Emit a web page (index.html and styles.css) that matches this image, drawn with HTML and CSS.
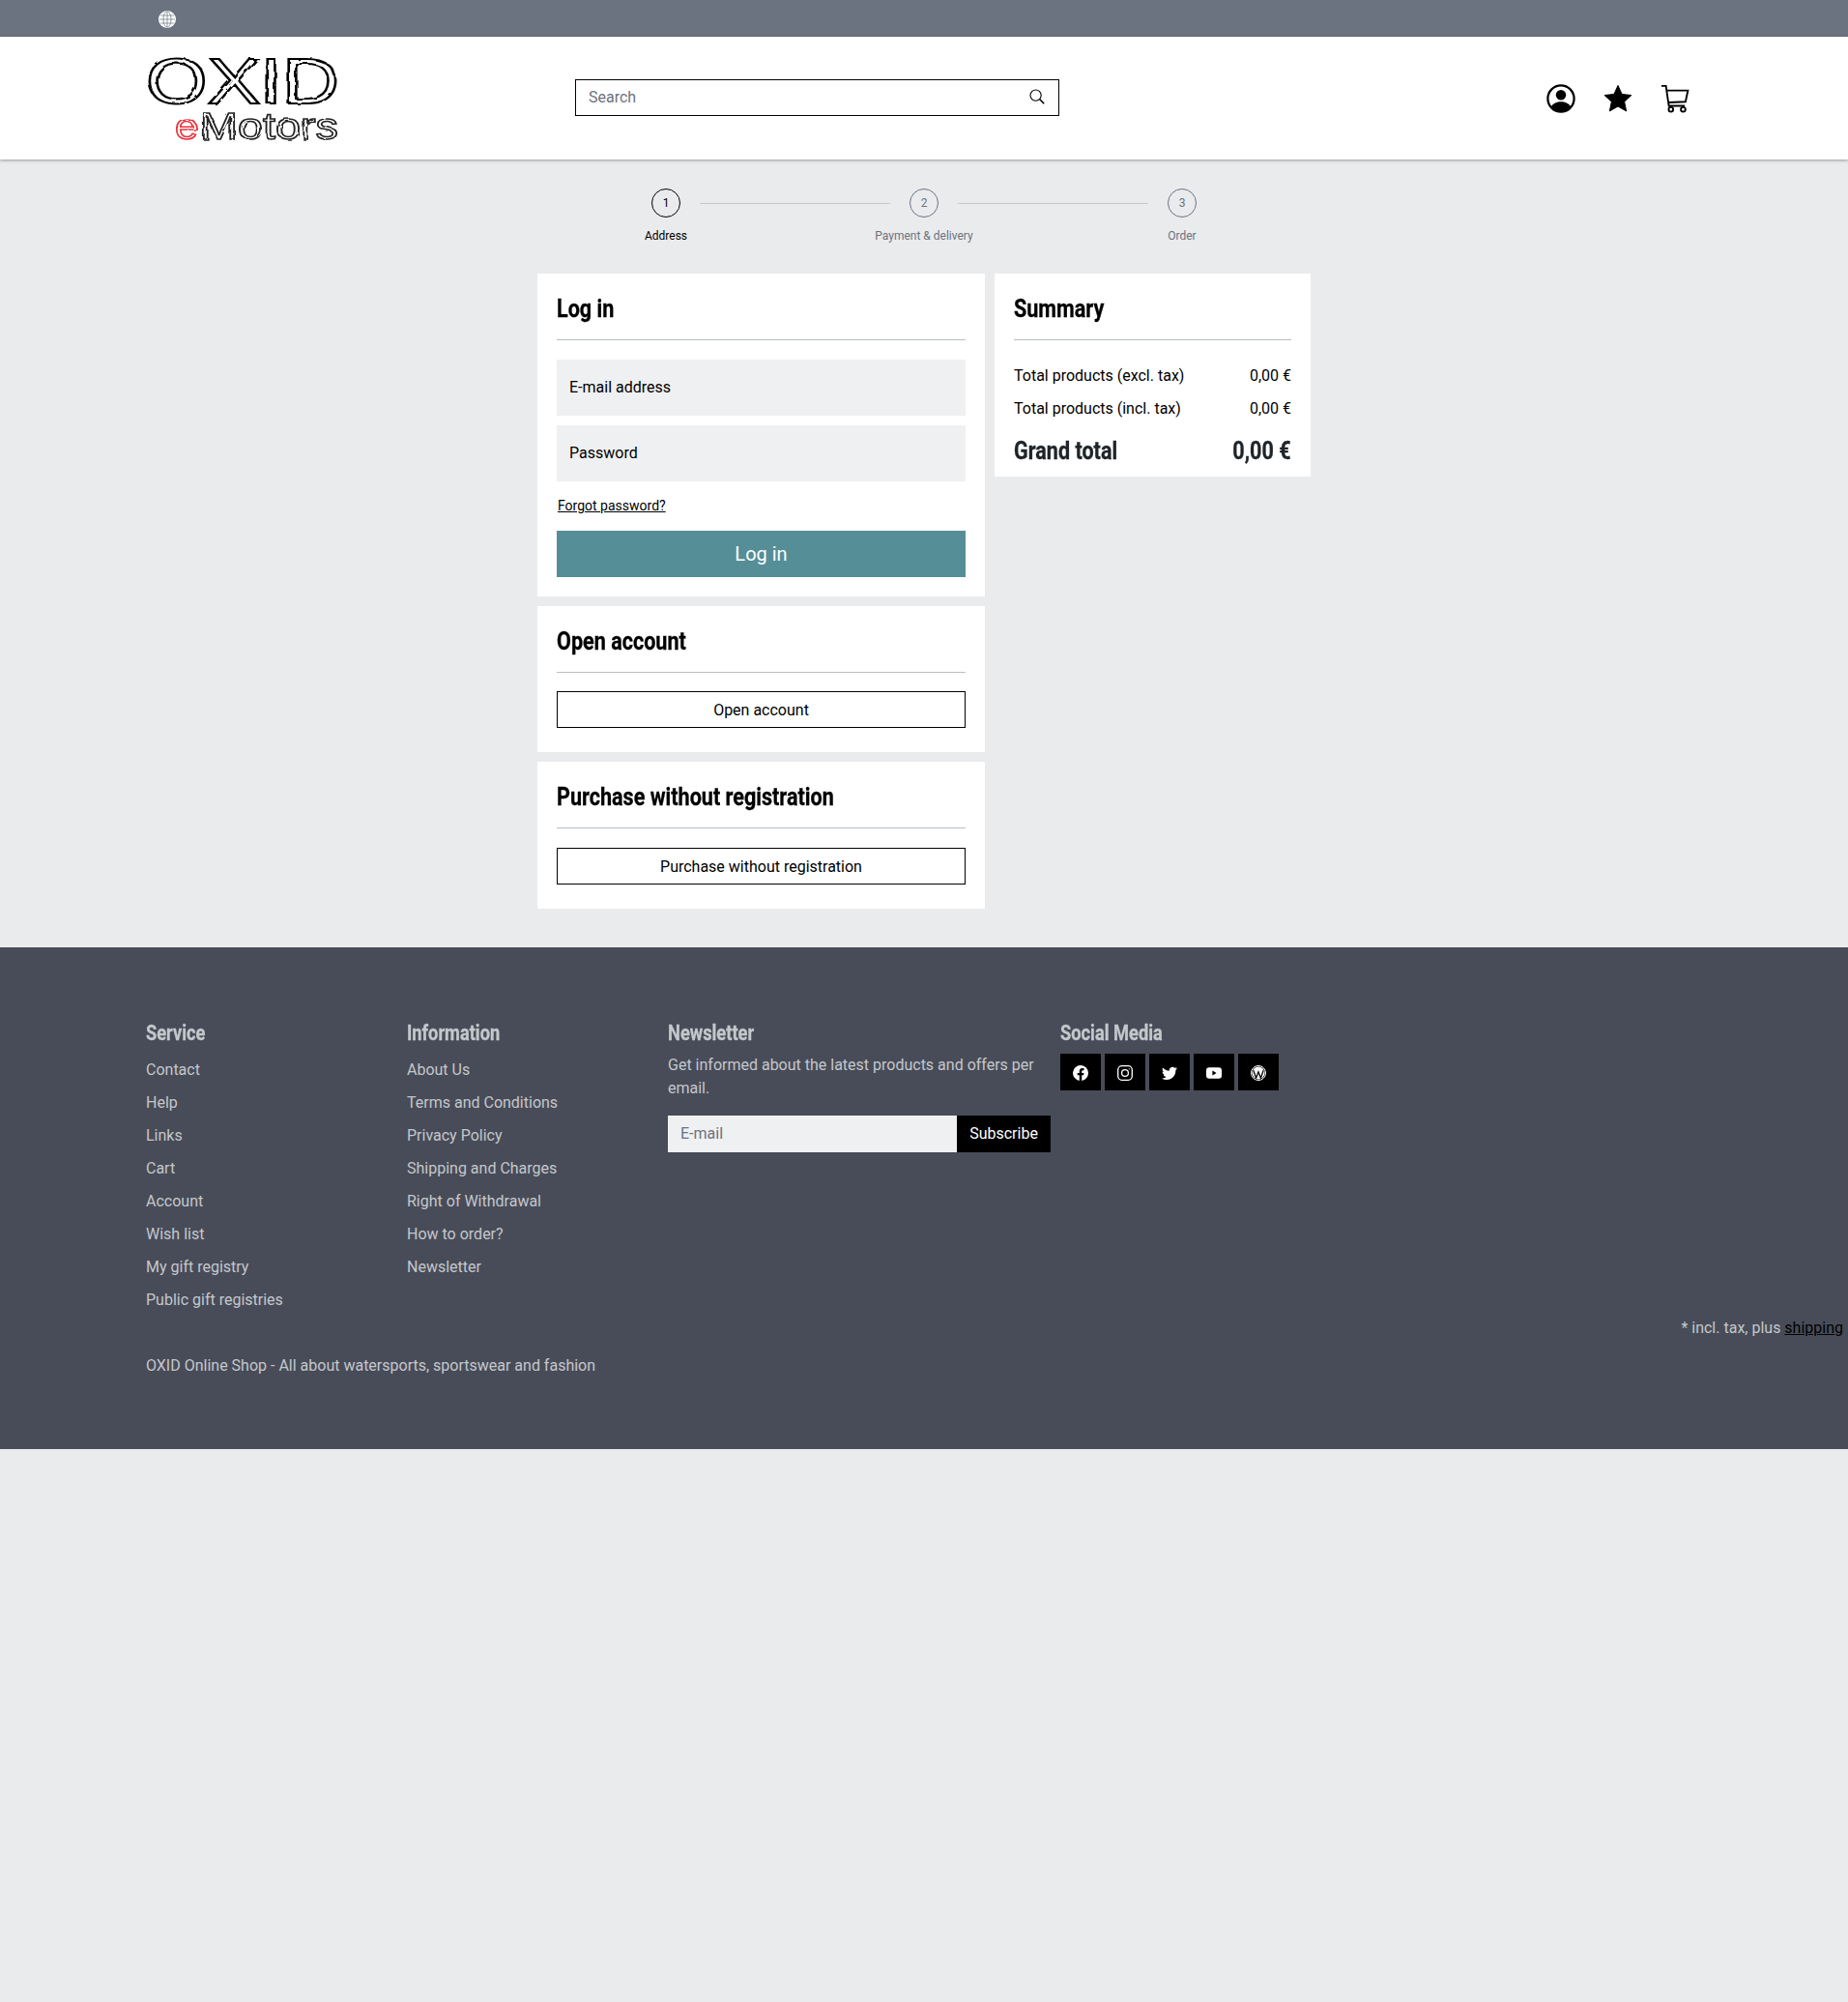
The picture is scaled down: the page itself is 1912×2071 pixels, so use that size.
FILE: index.html
```html
<!DOCTYPE html>
<html lang="en">

<head>
  <meta charset="UTF-8">
  <meta name="viewport" content="width=device-width, initial-scale=1.0">
  <title>OXID eMotors - Checkout</title>
  <link rel="stylesheet" href="styles.css">
</head>

<body>
  <!-- Top bar -->
  <div class="topbar">
    <svg class="globe" viewBox="0 0 18 18" fill="none" stroke="#6b7280" stroke-width="0.7">
      <circle cx="9" cy="9" r="9" fill="#fff" stroke="none"/>
      <ellipse cx="9" cy="9" rx="4" ry="8.2"/>
      <path d="M9 1v16M1 9h16M2.200 5h13.600M2.200 13h13.600"/>
    </svg>
  </div>

  <!-- Header -->
  <header class="header">
    <svg class="logo" viewBox="0 0 204 104">
      <defs>
        <filter id="scribble" x="-5%" y="-5%" width="110%" height="110%">
          <feTurbulence type="fractalNoise" baseFrequency="0.09" numOctaves="2" seed="4"/>
          <feDisplacementMap in="SourceGraphic" scale="3.500"/>
        </filter>
      </defs>
      <g filter="url(#scribble)">
        <text class="logoTop" x="1" y="57" textLength="200" lengthAdjust="spacingAndGlyphs">OXID</text>
        <text class="logoE" x="31" y="94" textLength="24" lengthAdjust="spacingAndGlyphs">e</text>
        <text class="logoBottom" x="57" y="94" textLength="143" lengthAdjust="spacingAndGlyphs">Motors</text>
      </g>
    </svg>

    <div class="search">
      <span class="searchText">Search</span>
      <svg class="searchIcon" viewBox="0 0 16 16" fill="none" stroke="#000">
        <circle cx="6.600" cy="6.600" r="5.600" stroke-width="1.100"/>
        <path d="M10.800 10.800l4.400 4.400" stroke-width="1.600"/>
      </svg>
    </div>

    <div class="headerIcons">
      <svg class="headerIcon" viewBox="0 0 32 32">
        <circle cx="16" cy="16" r="14.500" fill="none" stroke="#000" stroke-width="2.400"/>
        <circle cx="16" cy="12" r="5.600"/>
        <path d="M5 25c2.500-4 6.500-5.600 11-5.600s8.500 1.600 11 5.600c-2.600 3.200-6.500 5-11 5s-8.400-1.800-11-5z"/>
      </svg>
      <svg class="headerIcon" viewBox="0 0 32 32">
        <path d="M16 1.500l4.400 9.600 10.500 1.200-7.800 7.100 2.100 10.400L16 24.600 6.800 29.800l2.100-10.400-7.800-7.100 10.500-1.200z" stroke="#000" stroke-linejoin="round"/>
      </svg>
      <svg class="headerIcon" viewBox="0 0 32 32" fill="none" stroke="#000" stroke-width="2">
        <path d="M1 2h5l3.200 22h17.500"/>
        <path d="M6.800 7h23.500l-2.700 12.500-18.800 .8"/>
        <circle cx="11.500" cy="28" r="2.500"/>
        <circle cx="25" cy="28" r="2.500"/>
      </svg>
    </div>
  </header>

  <!-- Checkout steps -->
  <div class="steps">
    <div class="step stepActive">
      <span class="stepNumber">1</span>
      <span class="stepLabel">Address</span>
    </div>
    <span class="stepLine"></span>
    <div class="step">
      <span class="stepNumber">2</span>
      <span class="stepLabel">Payment &amp; delivery</span>
    </div>
    <span class="stepLine"></span>
    <div class="step">
      <span class="stepNumber">3</span>
      <span class="stepLabel">Order</span>
    </div>
  </div>

  <!-- Main -->
  <main class="checkout">
    <div class="checkoutLeft">
      <section class="card">
        <h2 class="cardTitle"><span class="cond">Log in</span></h2>
        <div class="field">E-mail address</div>
        <div class="field">Password</div>
        <a class="forgot" href="#">Forgot password?</a>
        <button class="btnPrimary">Log in</button>
      </section>

      <section class="card cardOpen">
        <h2 class="cardTitle"><span class="cond">Open account</span></h2>
        <button class="btnOutline">Open account</button>
      </section>

      <section class="card cardGuest">
        <h2 class="cardTitle"><span class="cond">Purchase without registration</span></h2>
        <button class="btnOutline">Purchase without registration</button>
      </section>
    </div>

    <aside class="card summary">
      <h2 class="cardTitle"><span class="cond">Summary</span></h2>
      <div class="summaryRow"><span>Total products (excl. tax)</span><span>0,00 €</span></div>
      <div class="summaryRow"><span>Total products (incl. tax)</span><span>0,00 €</span></div>
      <div class="summaryTotal"><span class="cond">Grand total</span><span class="cond condRight">0,00 €</span></div>
    </aside>
  </main>

  <!-- Footer -->
  <footer class="footer">
    <div class="footerColumns">
      <div class="footerCol">
        <h3 class="footerTitle"><span class="cond">Service</span></h3>
        <ul class="footerList">
          <li>Contact</li>
          <li>Help</li>
          <li>Links</li>
          <li>Cart</li>
          <li>Account</li>
          <li>Wish list</li>
          <li>My gift registry</li>
          <li>Public gift registries</li>
        </ul>
      </div>
      <div class="footerCol">
        <h3 class="footerTitle"><span class="cond">Information</span></h3>
        <ul class="footerList">
          <li>About Us</li>
          <li>Terms and Conditions</li>
          <li>Privacy Policy</li>
          <li>Shipping and Charges</li>
          <li>Right of Withdrawal</li>
          <li>How to order?</li>
          <li>Newsletter</li>
        </ul>
      </div>
      <div class="footerNews">
        <h3 class="footerTitle"><span class="cond">Newsletter</span></h3>
        <p class="newsText">Get informed about the latest products and offers per email.</p>
        <div class="newsForm">
          <span class="newsInput">E-mail</span>
          <span class="newsButton">Subscribe</span>
        </div>
      </div>
      <div class="footerSocial">
        <h3 class="footerTitle"><span class="cond">Social Media</span></h3>
        <div class="socialIcons">
          <span class="socialIcon">
            <svg viewBox="0 0 16 16" fill="#fff"><path d="M16 8a8 8 0 1 0-9.250 7.900v-5.600H4.700V8h2.050V6.200c0-2 1.200-3.100 3-3.100.9 0 1.800.150 1.800.150v2h-1c-1 0-1.300.6-1.300 1.250V8h2.200l-.350 2.300H9.250v5.600A8 8 0 0 0 16 8z"/></svg>
          </span>
          <span class="socialIcon">
            <svg viewBox="0 0 16 16" fill="none" stroke="#fff" stroke-width="1.300"><rect x=".7" y=".7" width="14.600" height="14.600" rx="4"/><circle cx="8" cy="8" r="3.400"/><circle cx="12.200" cy="3.800" r=".6" fill="#fff" stroke="none"/></svg>
          </span>
          <span class="socialIcon">
            <svg viewBox="0 0 16 16" fill="#fff"><path d="M16 3.300c-.6.300-1.200.450-1.900.550.700-.400 1.200-1 1.450-1.800-.650.350-1.350.650-2.100.8A3.300 3.300 0 0 0 7.800 5.800C5.100 5.650 2.700 4.350 1.100 2.400c-.9 1.500-.450 3.450 1 4.400-.55 0-1.050-.150-1.500-.400 0 1.600 1.150 3 2.650 3.300-.5.150-1 .150-1.500.050.400 1.300 1.600 2.250 3.050 2.300A6.600 6.600 0 0 1 0 13.400 9.300 9.300 0 0 0 14.350 5.100c.650-.450 1.200-1.050 1.650-1.800z"/></svg>
          </span>
          <span class="socialIcon">
            <svg viewBox="0 0 16 16"><rect y="2.300" width="16" height="11.400" rx="3" fill="#fff"/><path d="M6.400 5.600L10.600 8l-4.200 2.400z" fill="#000"/></svg>
          </span>
          <span class="socialIcon">
            <svg viewBox="0 0 16 16" fill="none"><circle cx="8" cy="8" r="7.500" stroke="#fff"/><circle cx="8" cy="8" r="6.500" fill="#fff"/><path d="M2.800 5.200l2.800 8 2.400-6.400 2.400 6.400 2.800-8" stroke="#000" stroke-width="1.300"/></svg>
          </span>
        </div>
      </div>
    </div>

    <p class="taxNote">* incl. tax, plus <a href="#">shipping</a></p>
    <p class="footerSlogan">OXID Online Shop - All about watersports, sportswear and fashion</p>
  </footer>
</body>

</html>
```

FILE: styles.css
```css
* {
  box-sizing: border-box;
}

body {
  margin: 0;
  min-height: 2071px;
  background-color: #eaebed;
  color: #000;
  font-family: Roboto, "Liberation Sans", sans-serif;
  font-size: 16px;
}

/* Squeezed bold text for headings */
.cond {
  display: inline-block;
  transform: scaleX(0.83);
  transform-origin: left center;
  -webkit-text-stroke: 0.3px currentColor;
  white-space: nowrap;
}

.condRight {
  transform-origin: right center;
}

/* Top bar */
.topbar {
  height: 38px;
  padding: 11px 0 0 164px;
  background-color: #6b7280;
}

.globe {
  display: block;
  width: 18px;
  height: 18px;
}

/* Header */
.header {
  display: flex;
  align-items: center;
  height: 127px;
  padding-left: 150px;
  background-color: #fff;
  box-shadow: 0 1px 3px rgba(0, 0, 0, 0.35);
}

.logo {
  width: 204px;
  height: 104px;
  margin-right: 241px;
}

.logo text {
  font-family: "Liberation Sans", sans-serif;
  fill: none;
  stroke: #000;
}

.logo .logoTop {
  font-size: 67px;
  stroke-width: 2.200;
}

.logo .logoBottom {
  font-size: 38px;
  stroke: #222;
  stroke-width: 1.500;
}

.logo .logoE {
  font-size: 38px;
  stroke: #e8343c;
  stroke-width: 1.500;
}

.search {
  display: flex;
  align-items: center;
  justify-content: space-between;
  width: 501px;
  height: 38px;
  margin-bottom: 2px;
  padding: 0 14px 0 13px;
  border: 1px solid #000;
}

.searchText {
  color: #6b7280;
}

.searchIcon {
  width: 16px;
  height: 16px;
  margin-bottom: 2px;
}

.headerIcons {
  display: flex;
  gap: 29px;
  margin-left: 504px;
}

.headerIcon {
  width: 30px;
  height: 30px;
}

/* Checkout steps */
.steps {
  display: flex;
  justify-content: center;
  align-items: flex-start;
  width: 800px;
  height: 118px;
  margin-left: 556px;
  padding-top: 30px;
}

.step {
  display: flex;
  flex-direction: column;
  align-items: center;
  width: 110px;
  flex-shrink: 0;
}

.stepNumber {
  width: 30px;
  height: 30px;
  border: 1px solid #6b7280;
  border-radius: 50%;
  color: #6b7280;
  font-size: 12px;
  line-height: 28px;
  text-align: center;
}

.stepLabel {
  margin-top: 12px;
  color: #6b7280;
  font-size: 12px;
}

.stepActive .stepNumber {
  border-color: #000;
  color: #000;
}

.stepActive .stepLabel {
  color: #000;
}

.stepLine {
  width: 197px;
  height: 1px;
  margin: 15px -20px 0;
  background-color: #c4c8cc;
}

/* Main */
.checkout {
  display: flex;
  align-items: flex-start;
  gap: 10px;
  height: 697px;
  padding-left: 556px;
}

.checkoutLeft {
  display: flex;
  flex-direction: column;
  gap: 10px;
  width: 463px;
}

.card {
  padding: 20px;
  background-color: #fff;
}

.cardTitle {
  height: 49px;
  margin: 0 0 20px;
  border-bottom: 1px solid #b8bfc2;
  font-size: 26px;
  font-weight: 700;
  line-height: 32px;
}

.field {
  height: 58px;
  margin-bottom: 10px;
  padding-left: 13px;
  background-color: #eff0f2;
  line-height: 58px;
}

.forgot {
  display: block;
  margin: 15px 0 16px 1px;
  color: #000;
  font-size: 14px;
  line-height: 20px;
}

.btnPrimary {
  display: block;
  width: 100%;
  height: 48px;
  border: 0;
  background-color: #558e97;
  color: #fff;
  font-family: inherit;
  font-size: 20px;
}

.btnOutline {
  display: block;
  width: 100%;
  height: 38px;
  border: 1px solid #000;
  background-color: #fff;
  color: #000;
  font-family: inherit;
  font-size: 16px;
}

.cardOpen,
.cardGuest {
  padding-bottom: 25px;
}

.cardOpen .cardTitle {
  margin-bottom: 19px;
}

.summary {
  width: 327px;
  height: 210px;
}

.summaryRow {
  display: flex;
  justify-content: space-between;
  height: 34px;
  line-height: 34px;
}

.summaryTotal {
  display: flex;
  justify-content: space-between;
  margin-top: 6px;
  color: #1f2428;
  font-size: 26px;
  font-weight: 700;
  line-height: 40px;
}

/* Footer */
.footer {
  height: 519px;
  padding: 72px 5px 0 151px;
  background-color: #484c58;
  color: #c4c7cc;
}

.footerColumns {
  display: flex;
  height: 310px;
}

.footerCol {
  width: 270px;
}

.footerNews {
  width: 396px;
  margin-right: 10px;
}

.footerTitle {
  margin: 0 0 4px;
  font-size: 22px;
  font-weight: 700;
  line-height: 34px;
}

.footerList {
  margin: 0;
  padding: 0;
  list-style: none;
}

.footerList li {
  height: 34px;
  line-height: 34px;
}

.newsText {
  margin: 0 0 16px;
  line-height: 24px;
}

.newsForm {
  display: flex;
  height: 38px;
}

.newsInput {
  width: 299px;
  padding-left: 13px;
  background-color: #eff0f2;
  color: #6b7280;
  line-height: 38px;
}

.newsButton {
  width: 97px;
  background-color: #000;
  color: #fff;
  line-height: 38px;
  text-align: center;
}

.socialIcons {
  display: flex;
  gap: 4px;
}

.socialIcon {
  display: flex;
  align-items: center;
  justify-content: center;
  width: 42px;
  height: 38px;
  padding-top: 2px;
  background-color: #000;
}

.socialIcon svg {
  width: 16px;
  height: 16px;
}

.taxNote {
  margin: 0;
  text-align: right;
  line-height: 24px;
}

.taxNote a {
  color: #000;
}

.footerSlogan {
  margin: 15px 0 0;
  line-height: 24px;
}
```
